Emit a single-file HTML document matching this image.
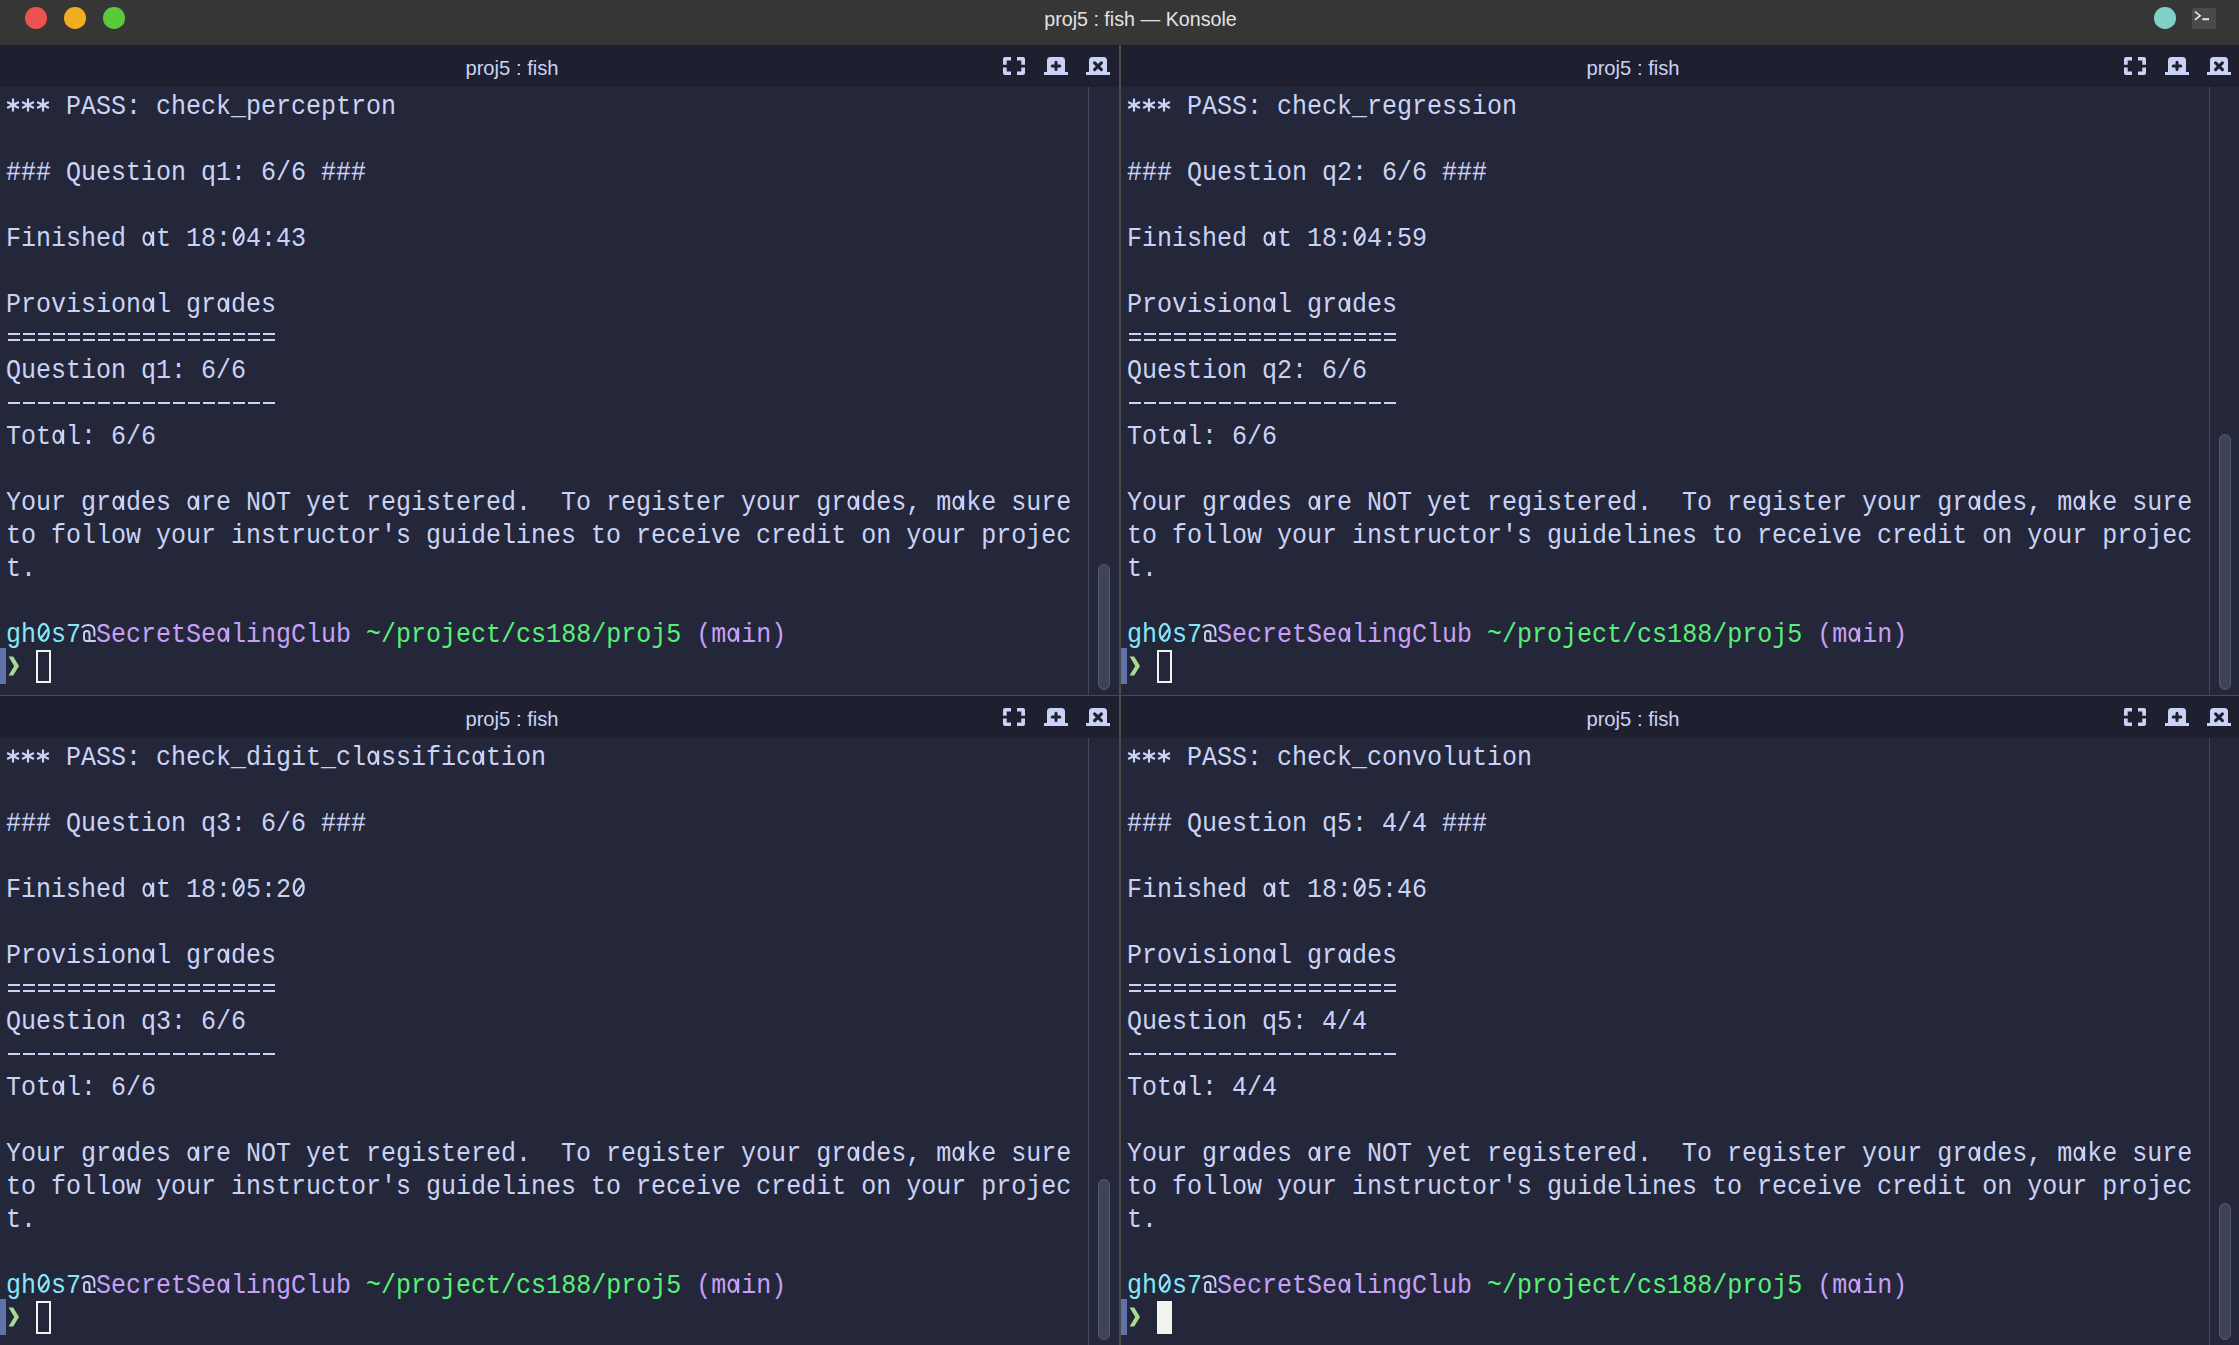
<!DOCTYPE html>
<html><head><meta charset="utf-8"><style>
html,body{margin:0;padding:0;}
body{width:2239px;height:1345px;position:relative;overflow:hidden;background:#24273a;font-family:"Liberation Mono",monospace;}
.a{position:absolute;}
.tb{left:0;top:0;width:2239px;height:45px;background:#363636;}
.dot{position:absolute;width:21.4px;height:21.4px;border-radius:50%;top:7.3px;}
.ttl{position:absolute;left:21px;top:0;width:2239px;height:45px;text-align:center;font-family:"Liberation Sans",sans-serif;font-size:19.7px;line-height:38px;color:#e2e2e2;}
.hdr{position:absolute;height:42px;background:#1e2030;}
.ptl{position:absolute;top:1.5px;height:42px;text-align:center;font-family:"Liberation Sans",sans-serif;font-size:20.2px;line-height:42px;color:#cad3f5;}
.ast{display:inline-block;width:15px;transform:translateY(5.5px) scale(1.3);}
.ln{position:absolute;height:33px;line-height:33px;font-size:25px;white-space:pre;color:#cad3f5;transform:scaleY(1.12);transform-origin:0 23px;}
.sbl{position:absolute;width:1px;background:#45485c;}
.thumb{position:absolute;width:10px;border:1px solid #555a70;background:#3f4359;border-radius:6px;}
.blue{position:absolute;width:6px;height:36px;background:#5f73a8;}
svg{position:absolute;overflow:visible;}
</style></head><body>
<div class="a tb"></div>
<div class="dot" style="left:25.3px;background:#ec5350"></div>
<div class="dot" style="left:64.2px;background:#f0ad1f"></div>
<div class="dot" style="left:103.3px;background:#5ac93a"></div>
<div class="ttl">proj5 : fish — Konsole</div>

<div class="hdr" style="left:0px;top:45px;width:1119px"><div class="ptl" style="left:1px;width:1022px">proj5 : fish</div></div>
<div class="ln" style="left:6px;top:91px">    PASS: check_perceptron</div>
<svg style="left:5.1px;top:97.3px" width="16" height="16"><g stroke="#cad3f5" stroke-width="2.2" stroke-linecap="butt"><path d="M8 1.5 V14.5"/><path d="M2.1 5 L13.9 11 M2.1 11 L13.9 5"/></g></svg>
<svg style="left:20.1px;top:97.3px" width="16" height="16"><g stroke="#cad3f5" stroke-width="2.2" stroke-linecap="butt"><path d="M8 1.5 V14.5"/><path d="M2.1 5 L13.9 11 M2.1 11 L13.9 5"/></g></svg>
<svg style="left:35.1px;top:97.3px" width="16" height="16"><g stroke="#cad3f5" stroke-width="2.2" stroke-linecap="butt"><path d="M8 1.5 V14.5"/><path d="M2.1 5 L13.9 11 M2.1 11 L13.9 5"/></g></svg>
<div class="ln" style="left:6px;top:157px">### Question q1: 6/6 ###</div>
<div class="ln" style="left:6px;top:223px">Finished  t 18: 4:43</div>
<svg style="left:141px;top:224px" width="15" height="24"><g fill="none" stroke="#cad3f5" stroke-width="2.15"><ellipse cx="6.6" cy="14.7" rx="4.05" ry="6.15"/><path d="M12.1 7.6 V22"/></g></svg>
<svg style="left:231px;top:224px" width="15" height="24"><g fill="none" stroke="#cad3f5" stroke-width="2.25"><ellipse cx="7.7" cy="12.4" rx="4.95" ry="8.5"/><path d="M4.2 19.3 L11.2 9.7"/></g></svg>
<div class="ln" style="left:6px;top:289px">Provision l gr des</div>
<svg style="left:141px;top:290px" width="15" height="24"><g fill="none" stroke="#cad3f5" stroke-width="2.15"><ellipse cx="6.6" cy="14.7" rx="4.05" ry="6.15"/><path d="M12.1 7.6 V22"/></g></svg>
<svg style="left:216px;top:290px" width="15" height="24"><g fill="none" stroke="#cad3f5" stroke-width="2.15"><ellipse cx="6.6" cy="14.7" rx="4.05" ry="6.15"/><path d="M12.1 7.6 V22"/></g></svg>
<div class="a" style="left:7.8px;top:332.5px;width:267px;height:2.1px;background:repeating-linear-gradient(to right,#cad3f5 0 12px,transparent 12px 15px)"></div>
<div class="a" style="left:7.8px;top:338.8px;width:267px;height:2.1px;background:repeating-linear-gradient(to right,#cad3f5 0 12px,transparent 12px 15px)"></div>
<div class="ln" style="left:6px;top:355px">Question q1: 6/6</div>
<div class="a" style="left:7.8px;top:401.5px;width:267px;height:2.1px;background:repeating-linear-gradient(to right,#cad3f5 0 12px,transparent 12px 15px)"></div>
<div class="ln" style="left:6px;top:421px">Tot l: 6/6</div>
<svg style="left:51px;top:422px" width="15" height="24"><g fill="none" stroke="#cad3f5" stroke-width="2.15"><ellipse cx="6.6" cy="14.7" rx="4.05" ry="6.15"/><path d="M12.1 7.6 V22"/></g></svg>
<div class="ln" style="left:6px;top:487px">Your gr des  re NOT yet registered.  To register your gr des, m ke sure</div>
<svg style="left:111px;top:488px" width="15" height="24"><g fill="none" stroke="#cad3f5" stroke-width="2.15"><ellipse cx="6.6" cy="14.7" rx="4.05" ry="6.15"/><path d="M12.1 7.6 V22"/></g></svg>
<svg style="left:186px;top:488px" width="15" height="24"><g fill="none" stroke="#cad3f5" stroke-width="2.15"><ellipse cx="6.6" cy="14.7" rx="4.05" ry="6.15"/><path d="M12.1 7.6 V22"/></g></svg>
<svg style="left:846px;top:488px" width="15" height="24"><g fill="none" stroke="#cad3f5" stroke-width="2.15"><ellipse cx="6.6" cy="14.7" rx="4.05" ry="6.15"/><path d="M12.1 7.6 V22"/></g></svg>
<svg style="left:951px;top:488px" width="15" height="24"><g fill="none" stroke="#cad3f5" stroke-width="2.15"><ellipse cx="6.6" cy="14.7" rx="4.05" ry="6.15"/><path d="M12.1 7.6 V22"/></g></svg>
<div class="ln" style="left:6px;top:520px">to follow your instructor&#x27;s guidelines to receive credit on your projec</div>
<div class="ln" style="left:6px;top:553px">t.</div>
<div class="ln" style="left:6px;top:619px"><span style="color:#84e8fa">gh s7</span><span style="color:#cad3f5"> </span><span style="color:#c6a0f6">SecretSe lingClub</span> <span style="color:#5af078">~/project/cs188/proj5</span><span style="color:#c6a0f6"> (m in)</span></div>
<svg style="left:36px;top:620px" width="15" height="24"><g fill="none" stroke="#84e8fa" stroke-width="2.25"><ellipse cx="7.7" cy="12.4" rx="4.95" ry="8.5"/><path d="M4.2 19.3 L11.2 9.7"/></g></svg>
<svg style="left:81px;top:620px" width="16" height="24"><g fill="none" stroke="#cad3f5" stroke-width="1.9"><path d="M0.8 7.6 Q3.2 5 7 5 Q13.4 5 13.4 11 V16.4"/><path d="M14.8 21 H5.6 Q3 21 3 18.5 V14 Q3 11 5.75 11 Q8.5 11 8.5 14 V21"/></g></svg>
<svg style="left:216px;top:620px" width="15" height="24"><g fill="none" stroke="#c6a0f6" stroke-width="2.15"><ellipse cx="6.6" cy="14.7" rx="4.05" ry="6.15"/><path d="M12.1 7.6 V22"/></g></svg>
<svg style="left:726px;top:620px" width="15" height="24"><g fill="none" stroke="#c6a0f6" stroke-width="2.15"><ellipse cx="6.6" cy="14.7" rx="4.05" ry="6.15"/><path d="M12.1 7.6 V22"/></g></svg>
<div class="blue" style="left:0px;top:648.0px"></div>
<svg class="a" style="left:6px;top:649.5px" width="15" height="33"><path d="M2.6 6.6 L7.2 6.6 L13 16.1 L7.2 25.6 L2.6 25.6 L8.2 16.1 Z" fill="#a6da95"/></svg>
<div class="a" style="left:36px;top:649.5px;width:11px;height:29px;border:2px solid #f4f4ee"></div>
<div class="sbl" style="left:1088px;top:87px;height:608px"></div>
<div class="thumb" style="left:1098px;top:564px;height:124px"></div>
<svg style="left:1003px;top:57px" width="22" height="18"><g fill="#cad3f5"><path d="M0 7.8 V2 Q0 0 2 0 H8 V3.6 H3.7 V7.8 Z"/><path d="M22 7.8 V2 Q22 0 20 0 H14 V3.6 H18.3 V7.8 Z"/><path d="M0 10.4 V16 Q0 18 2 18 H8 V14.4 H3.7 V10.4 Z"/><path d="M22 10.4 V16 Q22 18 20 18 H14 V14.4 H18.3 V10.4 Z"/></g></svg>
<svg style="left:1044px;top:57px" width="24" height="18"><path d="M3 14.5 V3.5 Q3 0 6.5 0 H17.5 Q21 0 21 3.5 V14.5 Q21 15 22.5 15 H24 V18 H0 V15 H1.5 Q3 15 3 14.5 Z" fill="#cad3f5"/><path d="M12 5.2 V12.6 M8.2 8.9 H15.8" stroke="#1e2030" stroke-width="3" stroke-linecap="round"/></svg>
<svg style="left:1086px;top:57px" width="24" height="18"><path d="M3 14.5 V3.5 Q3 0 6.5 0 H17.5 Q21 0 21 3.5 V14.5 Q21 15 22.5 15 H24 V18 H0 V15 H1.5 Q3 15 3 14.5 Z" fill="#cad3f5"/><path d="M8.6 5.8 L15.4 12.6 M15.4 5.8 L8.6 12.6" stroke="#1e2030" stroke-width="3.1" stroke-linecap="round"/></svg>
<div class="hdr" style="left:1121px;top:45px;width:1118px"><div class="ptl" style="left:1px;width:1022px">proj5 : fish</div></div>
<div class="ln" style="left:1127px;top:91px">    PASS: check_regression</div>
<svg style="left:1126.1px;top:97.3px" width="16" height="16"><g stroke="#cad3f5" stroke-width="2.2" stroke-linecap="butt"><path d="M8 1.5 V14.5"/><path d="M2.1 5 L13.9 11 M2.1 11 L13.9 5"/></g></svg>
<svg style="left:1141.1px;top:97.3px" width="16" height="16"><g stroke="#cad3f5" stroke-width="2.2" stroke-linecap="butt"><path d="M8 1.5 V14.5"/><path d="M2.1 5 L13.9 11 M2.1 11 L13.9 5"/></g></svg>
<svg style="left:1156.1px;top:97.3px" width="16" height="16"><g stroke="#cad3f5" stroke-width="2.2" stroke-linecap="butt"><path d="M8 1.5 V14.5"/><path d="M2.1 5 L13.9 11 M2.1 11 L13.9 5"/></g></svg>
<div class="ln" style="left:1127px;top:157px">### Question q2: 6/6 ###</div>
<div class="ln" style="left:1127px;top:223px">Finished  t 18: 4:59</div>
<svg style="left:1262px;top:224px" width="15" height="24"><g fill="none" stroke="#cad3f5" stroke-width="2.15"><ellipse cx="6.6" cy="14.7" rx="4.05" ry="6.15"/><path d="M12.1 7.6 V22"/></g></svg>
<svg style="left:1352px;top:224px" width="15" height="24"><g fill="none" stroke="#cad3f5" stroke-width="2.25"><ellipse cx="7.7" cy="12.4" rx="4.95" ry="8.5"/><path d="M4.2 19.3 L11.2 9.7"/></g></svg>
<div class="ln" style="left:1127px;top:289px">Provision l gr des</div>
<svg style="left:1262px;top:290px" width="15" height="24"><g fill="none" stroke="#cad3f5" stroke-width="2.15"><ellipse cx="6.6" cy="14.7" rx="4.05" ry="6.15"/><path d="M12.1 7.6 V22"/></g></svg>
<svg style="left:1337px;top:290px" width="15" height="24"><g fill="none" stroke="#cad3f5" stroke-width="2.15"><ellipse cx="6.6" cy="14.7" rx="4.05" ry="6.15"/><path d="M12.1 7.6 V22"/></g></svg>
<div class="a" style="left:1128.8px;top:332.5px;width:267px;height:2.1px;background:repeating-linear-gradient(to right,#cad3f5 0 12px,transparent 12px 15px)"></div>
<div class="a" style="left:1128.8px;top:338.8px;width:267px;height:2.1px;background:repeating-linear-gradient(to right,#cad3f5 0 12px,transparent 12px 15px)"></div>
<div class="ln" style="left:1127px;top:355px">Question q2: 6/6</div>
<div class="a" style="left:1128.8px;top:401.5px;width:267px;height:2.1px;background:repeating-linear-gradient(to right,#cad3f5 0 12px,transparent 12px 15px)"></div>
<div class="ln" style="left:1127px;top:421px">Tot l: 6/6</div>
<svg style="left:1172px;top:422px" width="15" height="24"><g fill="none" stroke="#cad3f5" stroke-width="2.15"><ellipse cx="6.6" cy="14.7" rx="4.05" ry="6.15"/><path d="M12.1 7.6 V22"/></g></svg>
<div class="ln" style="left:1127px;top:487px">Your gr des  re NOT yet registered.  To register your gr des, m ke sure</div>
<svg style="left:1232px;top:488px" width="15" height="24"><g fill="none" stroke="#cad3f5" stroke-width="2.15"><ellipse cx="6.6" cy="14.7" rx="4.05" ry="6.15"/><path d="M12.1 7.6 V22"/></g></svg>
<svg style="left:1307px;top:488px" width="15" height="24"><g fill="none" stroke="#cad3f5" stroke-width="2.15"><ellipse cx="6.6" cy="14.7" rx="4.05" ry="6.15"/><path d="M12.1 7.6 V22"/></g></svg>
<svg style="left:1967px;top:488px" width="15" height="24"><g fill="none" stroke="#cad3f5" stroke-width="2.15"><ellipse cx="6.6" cy="14.7" rx="4.05" ry="6.15"/><path d="M12.1 7.6 V22"/></g></svg>
<svg style="left:2072px;top:488px" width="15" height="24"><g fill="none" stroke="#cad3f5" stroke-width="2.15"><ellipse cx="6.6" cy="14.7" rx="4.05" ry="6.15"/><path d="M12.1 7.6 V22"/></g></svg>
<div class="ln" style="left:1127px;top:520px">to follow your instructor&#x27;s guidelines to receive credit on your projec</div>
<div class="ln" style="left:1127px;top:553px">t.</div>
<div class="ln" style="left:1127px;top:619px"><span style="color:#84e8fa">gh s7</span><span style="color:#cad3f5"> </span><span style="color:#c6a0f6">SecretSe lingClub</span> <span style="color:#5af078">~/project/cs188/proj5</span><span style="color:#c6a0f6"> (m in)</span></div>
<svg style="left:1157px;top:620px" width="15" height="24"><g fill="none" stroke="#84e8fa" stroke-width="2.25"><ellipse cx="7.7" cy="12.4" rx="4.95" ry="8.5"/><path d="M4.2 19.3 L11.2 9.7"/></g></svg>
<svg style="left:1202px;top:620px" width="16" height="24"><g fill="none" stroke="#cad3f5" stroke-width="1.9"><path d="M0.8 7.6 Q3.2 5 7 5 Q13.4 5 13.4 11 V16.4"/><path d="M14.8 21 H5.6 Q3 21 3 18.5 V14 Q3 11 5.75 11 Q8.5 11 8.5 14 V21"/></g></svg>
<svg style="left:1337px;top:620px" width="15" height="24"><g fill="none" stroke="#c6a0f6" stroke-width="2.15"><ellipse cx="6.6" cy="14.7" rx="4.05" ry="6.15"/><path d="M12.1 7.6 V22"/></g></svg>
<svg style="left:1847px;top:620px" width="15" height="24"><g fill="none" stroke="#c6a0f6" stroke-width="2.15"><ellipse cx="6.6" cy="14.7" rx="4.05" ry="6.15"/><path d="M12.1 7.6 V22"/></g></svg>
<div class="blue" style="left:1121px;top:648.0px"></div>
<svg class="a" style="left:1127px;top:649.5px" width="15" height="33"><path d="M2.6 6.6 L7.2 6.6 L13 16.1 L7.2 25.6 L2.6 25.6 L8.2 16.1 Z" fill="#a6da95"/></svg>
<div class="a" style="left:1157px;top:649.5px;width:11px;height:29px;border:2px solid #f4f4ee"></div>
<div class="sbl" style="left:2209px;top:87px;height:608px"></div>
<div class="thumb" style="left:2219px;top:434px;height:254px"></div>
<svg style="left:2124px;top:57px" width="22" height="18"><g fill="#cad3f5"><path d="M0 7.8 V2 Q0 0 2 0 H8 V3.6 H3.7 V7.8 Z"/><path d="M22 7.8 V2 Q22 0 20 0 H14 V3.6 H18.3 V7.8 Z"/><path d="M0 10.4 V16 Q0 18 2 18 H8 V14.4 H3.7 V10.4 Z"/><path d="M22 10.4 V16 Q22 18 20 18 H14 V14.4 H18.3 V10.4 Z"/></g></svg>
<svg style="left:2165px;top:57px" width="24" height="18"><path d="M3 14.5 V3.5 Q3 0 6.5 0 H17.5 Q21 0 21 3.5 V14.5 Q21 15 22.5 15 H24 V18 H0 V15 H1.5 Q3 15 3 14.5 Z" fill="#cad3f5"/><path d="M12 5.2 V12.6 M8.2 8.9 H15.8" stroke="#1e2030" stroke-width="3" stroke-linecap="round"/></svg>
<svg style="left:2207px;top:57px" width="24" height="18"><path d="M3 14.5 V3.5 Q3 0 6.5 0 H17.5 Q21 0 21 3.5 V14.5 Q21 15 22.5 15 H24 V18 H0 V15 H1.5 Q3 15 3 14.5 Z" fill="#cad3f5"/><path d="M8.6 5.8 L15.4 12.6 M15.4 5.8 L8.6 12.6" stroke="#1e2030" stroke-width="3.1" stroke-linecap="round"/></svg>
<div class="hdr" style="left:0px;top:696px;width:1119px"><div class="ptl" style="left:1px;width:1022px">proj5 : fish</div></div>
<div class="ln" style="left:6px;top:742px">    PASS: check_digit_cl ssific tion</div>
<svg style="left:5.1px;top:748.3px" width="16" height="16"><g stroke="#cad3f5" stroke-width="2.2" stroke-linecap="butt"><path d="M8 1.5 V14.5"/><path d="M2.1 5 L13.9 11 M2.1 11 L13.9 5"/></g></svg>
<svg style="left:20.1px;top:748.3px" width="16" height="16"><g stroke="#cad3f5" stroke-width="2.2" stroke-linecap="butt"><path d="M8 1.5 V14.5"/><path d="M2.1 5 L13.9 11 M2.1 11 L13.9 5"/></g></svg>
<svg style="left:35.1px;top:748.3px" width="16" height="16"><g stroke="#cad3f5" stroke-width="2.2" stroke-linecap="butt"><path d="M8 1.5 V14.5"/><path d="M2.1 5 L13.9 11 M2.1 11 L13.9 5"/></g></svg>
<svg style="left:366px;top:743px" width="15" height="24"><g fill="none" stroke="#cad3f5" stroke-width="2.15"><ellipse cx="6.6" cy="14.7" rx="4.05" ry="6.15"/><path d="M12.1 7.6 V22"/></g></svg>
<svg style="left:471px;top:743px" width="15" height="24"><g fill="none" stroke="#cad3f5" stroke-width="2.15"><ellipse cx="6.6" cy="14.7" rx="4.05" ry="6.15"/><path d="M12.1 7.6 V22"/></g></svg>
<div class="ln" style="left:6px;top:808px">### Question q3: 6/6 ###</div>
<div class="ln" style="left:6px;top:874px">Finished  t 18: 5:2 </div>
<svg style="left:141px;top:875px" width="15" height="24"><g fill="none" stroke="#cad3f5" stroke-width="2.15"><ellipse cx="6.6" cy="14.7" rx="4.05" ry="6.15"/><path d="M12.1 7.6 V22"/></g></svg>
<svg style="left:231px;top:875px" width="15" height="24"><g fill="none" stroke="#cad3f5" stroke-width="2.25"><ellipse cx="7.7" cy="12.4" rx="4.95" ry="8.5"/><path d="M4.2 19.3 L11.2 9.7"/></g></svg>
<svg style="left:291px;top:875px" width="15" height="24"><g fill="none" stroke="#cad3f5" stroke-width="2.25"><ellipse cx="7.7" cy="12.4" rx="4.95" ry="8.5"/><path d="M4.2 19.3 L11.2 9.7"/></g></svg>
<div class="ln" style="left:6px;top:940px">Provision l gr des</div>
<svg style="left:141px;top:941px" width="15" height="24"><g fill="none" stroke="#cad3f5" stroke-width="2.15"><ellipse cx="6.6" cy="14.7" rx="4.05" ry="6.15"/><path d="M12.1 7.6 V22"/></g></svg>
<svg style="left:216px;top:941px" width="15" height="24"><g fill="none" stroke="#cad3f5" stroke-width="2.15"><ellipse cx="6.6" cy="14.7" rx="4.05" ry="6.15"/><path d="M12.1 7.6 V22"/></g></svg>
<div class="a" style="left:7.8px;top:983.5px;width:267px;height:2.1px;background:repeating-linear-gradient(to right,#cad3f5 0 12px,transparent 12px 15px)"></div>
<div class="a" style="left:7.8px;top:989.8px;width:267px;height:2.1px;background:repeating-linear-gradient(to right,#cad3f5 0 12px,transparent 12px 15px)"></div>
<div class="ln" style="left:6px;top:1006px">Question q3: 6/6</div>
<div class="a" style="left:7.8px;top:1052.5px;width:267px;height:2.1px;background:repeating-linear-gradient(to right,#cad3f5 0 12px,transparent 12px 15px)"></div>
<div class="ln" style="left:6px;top:1072px">Tot l: 6/6</div>
<svg style="left:51px;top:1073px" width="15" height="24"><g fill="none" stroke="#cad3f5" stroke-width="2.15"><ellipse cx="6.6" cy="14.7" rx="4.05" ry="6.15"/><path d="M12.1 7.6 V22"/></g></svg>
<div class="ln" style="left:6px;top:1138px">Your gr des  re NOT yet registered.  To register your gr des, m ke sure</div>
<svg style="left:111px;top:1139px" width="15" height="24"><g fill="none" stroke="#cad3f5" stroke-width="2.15"><ellipse cx="6.6" cy="14.7" rx="4.05" ry="6.15"/><path d="M12.1 7.6 V22"/></g></svg>
<svg style="left:186px;top:1139px" width="15" height="24"><g fill="none" stroke="#cad3f5" stroke-width="2.15"><ellipse cx="6.6" cy="14.7" rx="4.05" ry="6.15"/><path d="M12.1 7.6 V22"/></g></svg>
<svg style="left:846px;top:1139px" width="15" height="24"><g fill="none" stroke="#cad3f5" stroke-width="2.15"><ellipse cx="6.6" cy="14.7" rx="4.05" ry="6.15"/><path d="M12.1 7.6 V22"/></g></svg>
<svg style="left:951px;top:1139px" width="15" height="24"><g fill="none" stroke="#cad3f5" stroke-width="2.15"><ellipse cx="6.6" cy="14.7" rx="4.05" ry="6.15"/><path d="M12.1 7.6 V22"/></g></svg>
<div class="ln" style="left:6px;top:1171px">to follow your instructor&#x27;s guidelines to receive credit on your projec</div>
<div class="ln" style="left:6px;top:1204px">t.</div>
<div class="ln" style="left:6px;top:1270px"><span style="color:#84e8fa">gh s7</span><span style="color:#cad3f5"> </span><span style="color:#c6a0f6">SecretSe lingClub</span> <span style="color:#5af078">~/project/cs188/proj5</span><span style="color:#c6a0f6"> (m in)</span></div>
<svg style="left:36px;top:1271px" width="15" height="24"><g fill="none" stroke="#84e8fa" stroke-width="2.25"><ellipse cx="7.7" cy="12.4" rx="4.95" ry="8.5"/><path d="M4.2 19.3 L11.2 9.7"/></g></svg>
<svg style="left:81px;top:1271px" width="16" height="24"><g fill="none" stroke="#cad3f5" stroke-width="1.9"><path d="M0.8 7.6 Q3.2 5 7 5 Q13.4 5 13.4 11 V16.4"/><path d="M14.8 21 H5.6 Q3 21 3 18.5 V14 Q3 11 5.75 11 Q8.5 11 8.5 14 V21"/></g></svg>
<svg style="left:216px;top:1271px" width="15" height="24"><g fill="none" stroke="#c6a0f6" stroke-width="2.15"><ellipse cx="6.6" cy="14.7" rx="4.05" ry="6.15"/><path d="M12.1 7.6 V22"/></g></svg>
<svg style="left:726px;top:1271px" width="15" height="24"><g fill="none" stroke="#c6a0f6" stroke-width="2.15"><ellipse cx="6.6" cy="14.7" rx="4.05" ry="6.15"/><path d="M12.1 7.6 V22"/></g></svg>
<div class="blue" style="left:0px;top:1299.0px"></div>
<svg class="a" style="left:6px;top:1300.5px" width="15" height="33"><path d="M2.6 6.6 L7.2 6.6 L13 16.1 L7.2 25.6 L2.6 25.6 L8.2 16.1 Z" fill="#a6da95"/></svg>
<div class="a" style="left:36px;top:1300.5px;width:11px;height:29px;border:2px solid #f4f4ee"></div>
<div class="sbl" style="left:1088px;top:738px;height:607px"></div>
<div class="thumb" style="left:1098px;top:1179px;height:159px"></div>
<svg style="left:1003px;top:708px" width="22" height="18"><g fill="#cad3f5"><path d="M0 7.8 V2 Q0 0 2 0 H8 V3.6 H3.7 V7.8 Z"/><path d="M22 7.8 V2 Q22 0 20 0 H14 V3.6 H18.3 V7.8 Z"/><path d="M0 10.4 V16 Q0 18 2 18 H8 V14.4 H3.7 V10.4 Z"/><path d="M22 10.4 V16 Q22 18 20 18 H14 V14.4 H18.3 V10.4 Z"/></g></svg>
<svg style="left:1044px;top:708px" width="24" height="18"><path d="M3 14.5 V3.5 Q3 0 6.5 0 H17.5 Q21 0 21 3.5 V14.5 Q21 15 22.5 15 H24 V18 H0 V15 H1.5 Q3 15 3 14.5 Z" fill="#cad3f5"/><path d="M12 5.2 V12.6 M8.2 8.9 H15.8" stroke="#1e2030" stroke-width="3" stroke-linecap="round"/></svg>
<svg style="left:1086px;top:708px" width="24" height="18"><path d="M3 14.5 V3.5 Q3 0 6.5 0 H17.5 Q21 0 21 3.5 V14.5 Q21 15 22.5 15 H24 V18 H0 V15 H1.5 Q3 15 3 14.5 Z" fill="#cad3f5"/><path d="M8.6 5.8 L15.4 12.6 M15.4 5.8 L8.6 12.6" stroke="#1e2030" stroke-width="3.1" stroke-linecap="round"/></svg>
<div class="hdr" style="left:1121px;top:696px;width:1118px"><div class="ptl" style="left:1px;width:1022px">proj5 : fish</div></div>
<div class="ln" style="left:1127px;top:742px">    PASS: check_convolution</div>
<svg style="left:1126.1px;top:748.3px" width="16" height="16"><g stroke="#cad3f5" stroke-width="2.2" stroke-linecap="butt"><path d="M8 1.5 V14.5"/><path d="M2.1 5 L13.9 11 M2.1 11 L13.9 5"/></g></svg>
<svg style="left:1141.1px;top:748.3px" width="16" height="16"><g stroke="#cad3f5" stroke-width="2.2" stroke-linecap="butt"><path d="M8 1.5 V14.5"/><path d="M2.1 5 L13.9 11 M2.1 11 L13.9 5"/></g></svg>
<svg style="left:1156.1px;top:748.3px" width="16" height="16"><g stroke="#cad3f5" stroke-width="2.2" stroke-linecap="butt"><path d="M8 1.5 V14.5"/><path d="M2.1 5 L13.9 11 M2.1 11 L13.9 5"/></g></svg>
<div class="ln" style="left:1127px;top:808px">### Question q5: 4/4 ###</div>
<div class="ln" style="left:1127px;top:874px">Finished  t 18: 5:46</div>
<svg style="left:1262px;top:875px" width="15" height="24"><g fill="none" stroke="#cad3f5" stroke-width="2.15"><ellipse cx="6.6" cy="14.7" rx="4.05" ry="6.15"/><path d="M12.1 7.6 V22"/></g></svg>
<svg style="left:1352px;top:875px" width="15" height="24"><g fill="none" stroke="#cad3f5" stroke-width="2.25"><ellipse cx="7.7" cy="12.4" rx="4.95" ry="8.5"/><path d="M4.2 19.3 L11.2 9.7"/></g></svg>
<div class="ln" style="left:1127px;top:940px">Provision l gr des</div>
<svg style="left:1262px;top:941px" width="15" height="24"><g fill="none" stroke="#cad3f5" stroke-width="2.15"><ellipse cx="6.6" cy="14.7" rx="4.05" ry="6.15"/><path d="M12.1 7.6 V22"/></g></svg>
<svg style="left:1337px;top:941px" width="15" height="24"><g fill="none" stroke="#cad3f5" stroke-width="2.15"><ellipse cx="6.6" cy="14.7" rx="4.05" ry="6.15"/><path d="M12.1 7.6 V22"/></g></svg>
<div class="a" style="left:1128.8px;top:983.5px;width:267px;height:2.1px;background:repeating-linear-gradient(to right,#cad3f5 0 12px,transparent 12px 15px)"></div>
<div class="a" style="left:1128.8px;top:989.8px;width:267px;height:2.1px;background:repeating-linear-gradient(to right,#cad3f5 0 12px,transparent 12px 15px)"></div>
<div class="ln" style="left:1127px;top:1006px">Question q5: 4/4</div>
<div class="a" style="left:1128.8px;top:1052.5px;width:267px;height:2.1px;background:repeating-linear-gradient(to right,#cad3f5 0 12px,transparent 12px 15px)"></div>
<div class="ln" style="left:1127px;top:1072px">Tot l: 4/4</div>
<svg style="left:1172px;top:1073px" width="15" height="24"><g fill="none" stroke="#cad3f5" stroke-width="2.15"><ellipse cx="6.6" cy="14.7" rx="4.05" ry="6.15"/><path d="M12.1 7.6 V22"/></g></svg>
<div class="ln" style="left:1127px;top:1138px">Your gr des  re NOT yet registered.  To register your gr des, m ke sure</div>
<svg style="left:1232px;top:1139px" width="15" height="24"><g fill="none" stroke="#cad3f5" stroke-width="2.15"><ellipse cx="6.6" cy="14.7" rx="4.05" ry="6.15"/><path d="M12.1 7.6 V22"/></g></svg>
<svg style="left:1307px;top:1139px" width="15" height="24"><g fill="none" stroke="#cad3f5" stroke-width="2.15"><ellipse cx="6.6" cy="14.7" rx="4.05" ry="6.15"/><path d="M12.1 7.6 V22"/></g></svg>
<svg style="left:1967px;top:1139px" width="15" height="24"><g fill="none" stroke="#cad3f5" stroke-width="2.15"><ellipse cx="6.6" cy="14.7" rx="4.05" ry="6.15"/><path d="M12.1 7.6 V22"/></g></svg>
<svg style="left:2072px;top:1139px" width="15" height="24"><g fill="none" stroke="#cad3f5" stroke-width="2.15"><ellipse cx="6.6" cy="14.7" rx="4.05" ry="6.15"/><path d="M12.1 7.6 V22"/></g></svg>
<div class="ln" style="left:1127px;top:1171px">to follow your instructor&#x27;s guidelines to receive credit on your projec</div>
<div class="ln" style="left:1127px;top:1204px">t.</div>
<div class="ln" style="left:1127px;top:1270px"><span style="color:#84e8fa">gh s7</span><span style="color:#cad3f5"> </span><span style="color:#c6a0f6">SecretSe lingClub</span> <span style="color:#5af078">~/project/cs188/proj5</span><span style="color:#c6a0f6"> (m in)</span></div>
<svg style="left:1157px;top:1271px" width="15" height="24"><g fill="none" stroke="#84e8fa" stroke-width="2.25"><ellipse cx="7.7" cy="12.4" rx="4.95" ry="8.5"/><path d="M4.2 19.3 L11.2 9.7"/></g></svg>
<svg style="left:1202px;top:1271px" width="16" height="24"><g fill="none" stroke="#cad3f5" stroke-width="1.9"><path d="M0.8 7.6 Q3.2 5 7 5 Q13.4 5 13.4 11 V16.4"/><path d="M14.8 21 H5.6 Q3 21 3 18.5 V14 Q3 11 5.75 11 Q8.5 11 8.5 14 V21"/></g></svg>
<svg style="left:1337px;top:1271px" width="15" height="24"><g fill="none" stroke="#c6a0f6" stroke-width="2.15"><ellipse cx="6.6" cy="14.7" rx="4.05" ry="6.15"/><path d="M12.1 7.6 V22"/></g></svg>
<svg style="left:1847px;top:1271px" width="15" height="24"><g fill="none" stroke="#c6a0f6" stroke-width="2.15"><ellipse cx="6.6" cy="14.7" rx="4.05" ry="6.15"/><path d="M12.1 7.6 V22"/></g></svg>
<div class="blue" style="left:1121px;top:1299.0px"></div>
<svg class="a" style="left:1127px;top:1300.5px" width="15" height="33"><path d="M2.6 6.6 L7.2 6.6 L13 16.1 L7.2 25.6 L2.6 25.6 L8.2 16.1 Z" fill="#a6da95"/></svg>
<div class="a" style="left:1157px;top:1300.5px;width:15px;height:33px;background:#f4f4ee"></div>
<div class="sbl" style="left:2209px;top:738px;height:607px"></div>
<div class="thumb" style="left:2219px;top:1203px;height:135px"></div>
<svg style="left:2124px;top:708px" width="22" height="18"><g fill="#cad3f5"><path d="M0 7.8 V2 Q0 0 2 0 H8 V3.6 H3.7 V7.8 Z"/><path d="M22 7.8 V2 Q22 0 20 0 H14 V3.6 H18.3 V7.8 Z"/><path d="M0 10.4 V16 Q0 18 2 18 H8 V14.4 H3.7 V10.4 Z"/><path d="M22 10.4 V16 Q22 18 20 18 H14 V14.4 H18.3 V10.4 Z"/></g></svg>
<svg style="left:2165px;top:708px" width="24" height="18"><path d="M3 14.5 V3.5 Q3 0 6.5 0 H17.5 Q21 0 21 3.5 V14.5 Q21 15 22.5 15 H24 V18 H0 V15 H1.5 Q3 15 3 14.5 Z" fill="#cad3f5"/><path d="M12 5.2 V12.6 M8.2 8.9 H15.8" stroke="#1e2030" stroke-width="3" stroke-linecap="round"/></svg>
<svg style="left:2207px;top:708px" width="24" height="18"><path d="M3 14.5 V3.5 Q3 0 6.5 0 H17.5 Q21 0 21 3.5 V14.5 Q21 15 22.5 15 H24 V18 H0 V15 H1.5 Q3 15 3 14.5 Z" fill="#cad3f5"/><path d="M8.6 5.8 L15.4 12.6 M15.4 5.8 L8.6 12.6" stroke="#1e2030" stroke-width="3.1" stroke-linecap="round"/></svg>
<div class="a" style="left:1119px;top:45px;width:2px;height:1300px;background:#4b4b4b"></div>
<div class="a" style="left:0;top:695px;width:2239px;height:1px;background:#4b4b4b"></div>
<div class="a" style="left:2154.2px;top:7.2px;width:21.4px;height:21.4px;border-radius:50%;background:#7fd1c7"></div>
<div class="a" style="left:2192px;top:7.5px;width:24px;height:21px;border-radius:2px;background:#4a4a4a"></div>
<svg style="left:2192px;top:7.5px" width="24" height="21"><path d="M2.9 3.7 L8.2 7.7 L2.9 11.8" fill="none" stroke="#e8e8e8" stroke-width="1.5"/><path d="M10.4 11.2 H17" stroke="#e8e8e8" stroke-width="2"/></svg>
</body></html>
